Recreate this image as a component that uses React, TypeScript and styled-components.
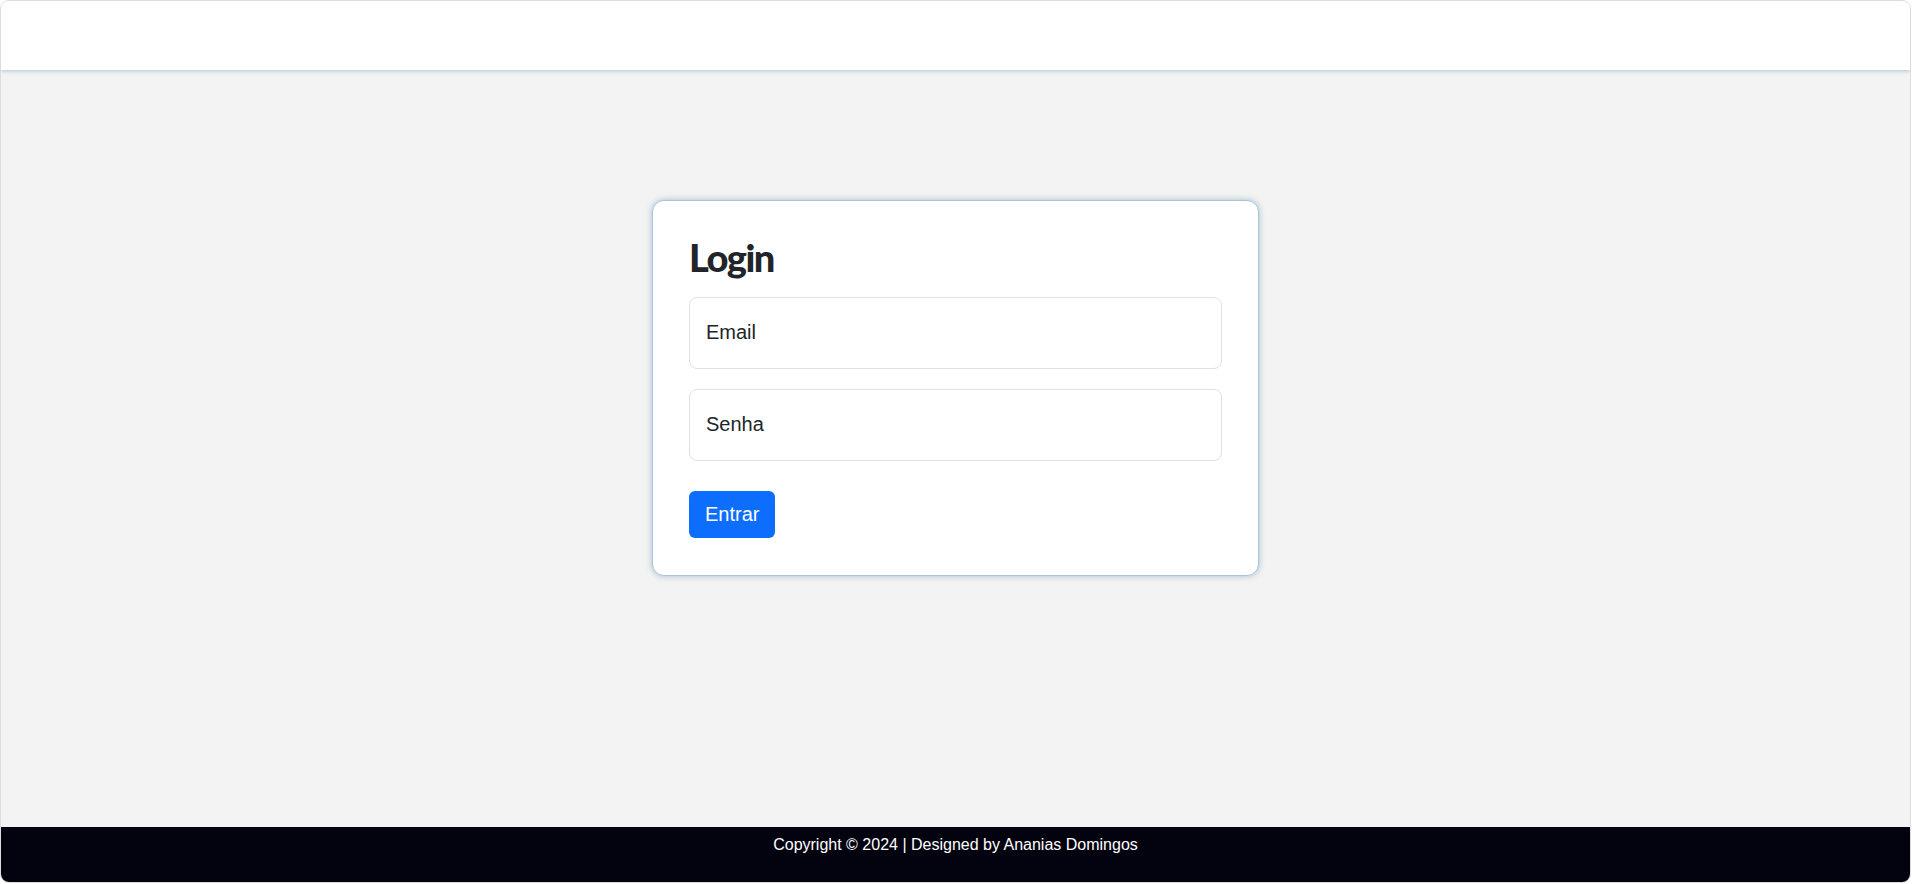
import React from "react";
import styled, { createGlobalStyle } from "styled-components";

const GlobalStyle = createGlobalStyle`
  * {
    box-sizing: border-box;
  }

  body {
    margin: 0;
    background: #ffffff;
    font-family: "Liberation Sans", Arial, sans-serif;
  }
`;

const Frame = styled.div`
  display: flex;
  flex-direction: column;
  width: 1911px;
  height: 883px;
  border: 1px solid #dcdcdc;
  border-radius: 9px;
  overflow: hidden;
`;

const Header = styled.header`
  position: relative;
  z-index: 1;
  height: 69px;
  background: #ffffff;
  box-shadow: 0 1px 4px rgba(110, 160, 190, 0.55);
`;

const Main = styled.main`
  flex: 1;
  display: flex;
  justify-content: center;
  align-items: flex-start;
  padding-top: 130px;
  background: #f3f3f3;
`;

const Card = styled.div`
  width: 607px;
  padding: 34px 36px 37px;
  background: #ffffff;
  border: 1px solid #a8c5da;
  border-radius: 12px;
  box-shadow: 0 0 6px rgba(90, 140, 180, 0.5);
`;

const Title = styled.h2`
  margin: 0 0 16px;
  font-family: Lato, "Noto Sans", sans-serif;
  font-weight: 900;
  font-size: 38px;
  line-height: 1.2;
  letter-spacing: -1.5px;
  color: #212529;
`;

const Form = styled.form`
  display: flex;
  flex-direction: column;
  align-items: flex-start;
  gap: 20px;
`;

const Input = styled.input`
  width: 100%;
  height: 72px;
  padding: 0 16px;
  border: 1px solid #dee2e6;
  border-radius: 8px;
  background: #ffffff;
  font-family: "Liberation Sans", Arial, sans-serif;
  font-size: 20px;
  color: #212529;
  outline: none;

  &::placeholder {
    color: #212529;
    opacity: 1;
  }
`;

const Button = styled.button<{ $spaced?: boolean }>`
  margin-top: ${(p) => (p.$spaced ? "10px" : "0")};
  height: 47px;
  padding: 0 16px;
  border: none;
  border-radius: 6px;
  background: #0d6efd;
  color: #ffffff;
  font-family: "Liberation Sans", Arial, sans-serif;
  font-size: 20px;
  cursor: pointer;
`;

const Footer = styled.footer`
  height: 55px;
  padding-top: 9px;
  background: #03020f;
  color: #ffffff;
  text-align: center;
  font-size: 16px;
  line-height: 18px;
`;

export default function App() {
  return (
    <React.Fragment>
      <GlobalStyle />
      <Frame>
        <Header />
        <Main>
          <Card>
            <Title>Login</Title>
            <Form onSubmit={(e) => e.preventDefault()}>
              <Input type="email" placeholder="Email" />
              <Input type="password" placeholder="Senha" />
              <Button type="submit" $spaced>
                Entrar
              </Button>
            </Form>
          </Card>
        </Main>
        <Footer>Copyright © 2024 | Designed by Ananias Domingos</Footer>
      </Frame>
    </React.Fragment>
  );
}
